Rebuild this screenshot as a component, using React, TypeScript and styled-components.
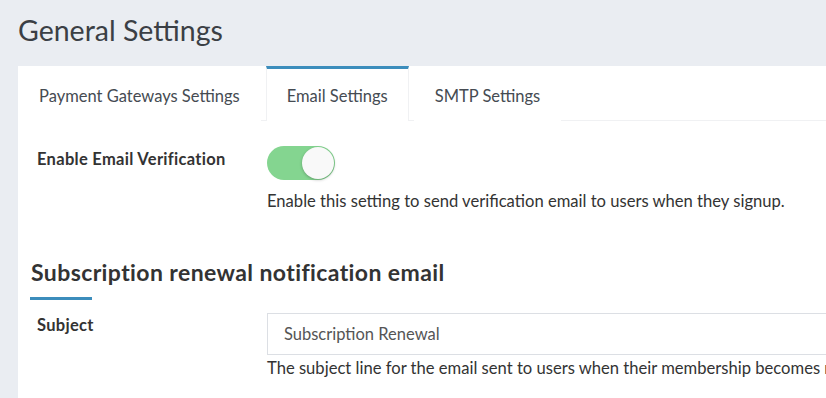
import React, { useState } from "react";
import styled, { createGlobalStyle } from "styled-components";

const GlobalStyle = createGlobalStyle`
  html, body {
    margin: 0;
    padding: 0;
    background: #eaedf2;
    font-family: "Lato", "Open Sans", sans-serif;
    color: #333;
    overflow: hidden;
  }
`;

const tabs = ["Payment Gateways Settings", "Email Settings", "SMTP Settings"];

export default function App() {
  const [activeTab, setActiveTab] = useState(1);
  const [verify, setVerify] = useState(true);

  return (
    <>
      <GlobalStyle />
      <Page>
        <Title>General Settings</Title>
        <Card>
          <TabBar>
            {tabs.map((t, i) => (
              <Tab key={t} $active={i === activeTab} onClick={() => setActiveTab(i)}>
                {t}
              </Tab>
            ))}
          </TabBar>
          <Body>
            <FormRow>
              <Label $top={3}>Enable Email Verification</Label>
              <Control>
                <Toggle $on={verify} onClick={() => setVerify(!verify)}>
                  <Knob $on={verify} />
                </Toggle>
                <Help $gap={11}>
                  Enable this setting to send verification email to users when they signup.
                </Help>
              </Control>
            </FormRow>

            <SectionTitle>Subscription renewal notification email</SectionTitle>
            <Underline />

            <FormRow>
              <Label $top={2}>Subject</Label>
              <Control>
                <Input defaultValue="Subscription Renewal" />
                <Help $gap={3}>
                  The subject line for the email sent to users when their membership becomes renewed.
                </Help>
              </Control>
            </FormRow>
          </Body>
        </Card>
      </Page>
    </>
  );
}

const Page = styled.div`
  padding: 12px 0 0 18px;
  width: 808px;
  height: 386px;
  overflow: hidden;
`;

const Title = styled.h1`
  margin: 0 0 17px 0;
  font-size: 28.5px;
  font-weight: 400;
  color: #3b3f45;
  line-height: 37px;
`;

const Card = styled.div`
  background: #fff;
  height: 340px;
  overflow: hidden;
`;

const TabBar = styled.div`
  display: flex;
  border-bottom: 1px solid #f0f1f3;
  height: 54px;
`;

const Tab = styled.div<{ $active: boolean }>`
  display: flex;
  align-items: center;
  padding: 1px 20px 0;
  margin-right: 5px;
  font-size: 16.5px;
  color: #454b52;
  cursor: pointer;
  white-space: nowrap;
  border-top: 3px solid ${(p) => (p.$active ? "#3c8dbc" : "transparent")};
  border-left: 1px solid ${(p) => (p.$active ? "#f0f1f3" : "transparent")};
  border-right: 1px solid ${(p) => (p.$active ? "#f0f1f3" : "transparent")};
  margin-bottom: -1px;
  background: #fff;
`;

const Body = styled.div`
  padding: 25px 0 0 12px;
`;

const FormRow = styled.div`
  display: grid;
  grid-template-columns: 237px 1fr;
  align-items: start;
`;

const Label = styled.div<{ $top: number }>`
  padding: ${(p) => p.$top}px 0 0 7px;
  font-size: 16.5px;
  line-height: 20px;
  font-weight: 700;
  letter-spacing: 0.3px;
  color: #333;
`;

const Control = styled.div`
  display: flex;
  flex-direction: column;
  align-items: flex-start;
`;

const Toggle = styled.div<{ $on: boolean }>`
  position: relative;
  width: 68px;
  height: 34px;
  border-radius: 17px;
  background: ${(p) => (p.$on ? "#84d590" : "#ccc")};
  cursor: pointer;
`;

const Knob = styled.div<{ $on: boolean }>`
  position: absolute;
  top: 1px;
  left: ${(p) => (p.$on ? "35px" : "1px")};
  width: 32px;
  height: 32px;
  border-radius: 50%;
  background: #f9f9f9;
  box-shadow: 0 1px 3px rgba(0, 0, 0, 0.25);
`;

const Help = styled.div<{ $gap: number }>`
  margin-top: ${(p) => p.$gap}px;
  font-size: 16.6px;
  line-height: 20px;
  color: #333;
  white-space: nowrap;
`;

const SectionTitle = styled.h3`
  margin: 47px 0 0 1px;
  font-size: 23px;
  line-height: 28px;
  font-weight: 700;
  color: #333;
  letter-spacing: 0.4px;
`;

const Underline = styled.div`
  width: 62px;
  height: 3px;
  background: #3c8dbc;
  margin: 11px 0 13px 0;
`;

const Input = styled.input`
  box-sizing: border-box;
  width: 640px;
  height: 42px;
  border: 1px solid #dcdfe4;
  padding: 0 16px;
  font-family: inherit;
  font-size: 16.5px;
  color: #555;
  outline: none;
`;
